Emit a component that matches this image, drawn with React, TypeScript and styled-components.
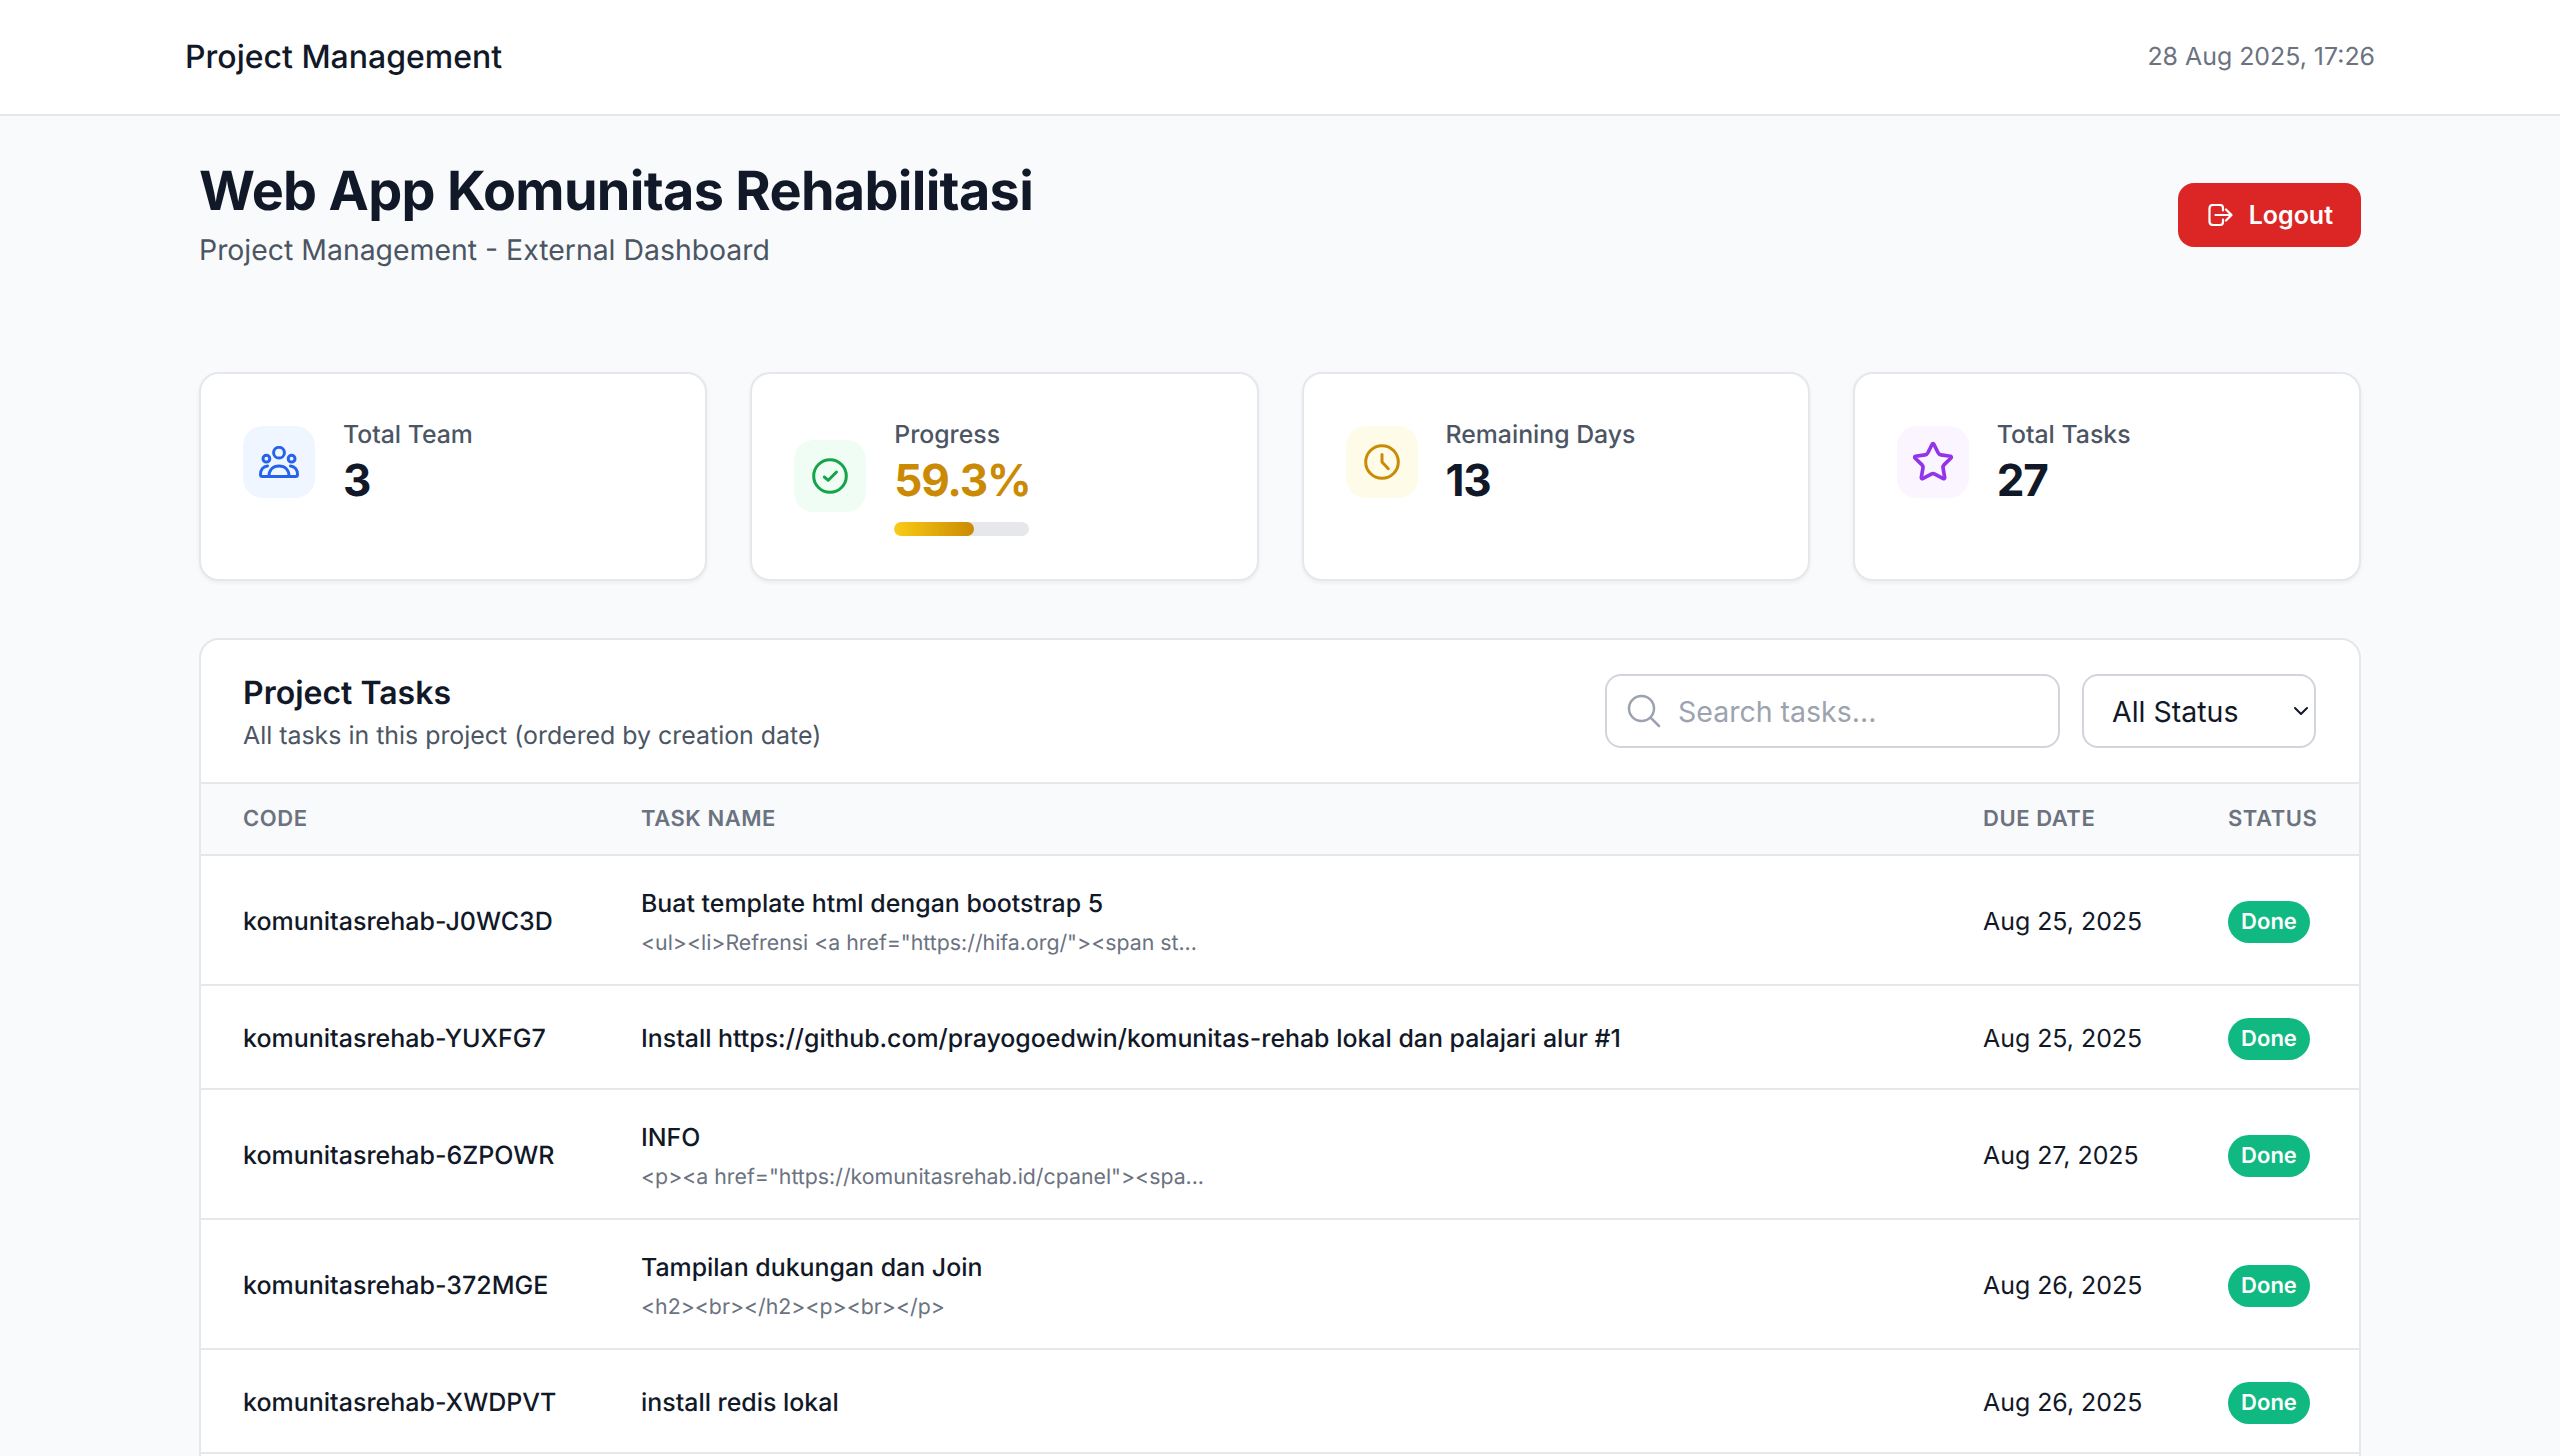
import styled, { createGlobalStyle } from 'styled-components';
import { Star, ChevronDown } from 'lucide-react';

const GlobalStyle = createGlobalStyle`
  html, body {
    margin: 0;
    height: 100%;
    overflow: hidden;
    background: #f9fafb;
    font-family: Inter, 'Noto Sans', sans-serif;
    color: #111827;
    text-rendering: geometricPrecision;
  }
  * { box-sizing: border-box; }
`;

const TONES = {
  blue: { bg: '#eff6ff', fg: '#2563eb' },
  green: { bg: '#f0fdf4', fg: '#16a34a' },
  yellow: { bg: '#fefce8', fg: '#ca8a04' },
  purple: { bg: '#faf5ff', fg: '#9333ea' },
};
type Tone = keyof typeof TONES;

const TopBar = styled.header`
  display: flex;
  align-items: center;
  justify-content: space-between;
  height: 116px;
  padding: 0 185px;
  background: #fff;
  border-bottom: 2px solid #e5e7eb;
`;

const Brand = styled.div`
  font-size: 32px;
  line-height: 40px;
  font-weight: 500;
  margin-bottom: 1px;
`;

const Clock = styled.div`
  font-size: 24.9px;
  color: #6b7280;
`;

const Main = styled.main`
  padding: 42px 199px 0;
`;

const PageHead = styled.div`
  display: flex;
  align-items: center;
  justify-content: space-between;
  margin-bottom: 101px;
`;

const PageTitle = styled.h1`
  margin: 2px 0 0;
  font-size: 54px;
  line-height: 64px;
  font-weight: 700;
  letter-spacing: -0.7px;
`;

const PageSub = styled.p`
  margin: 5px 0 0;
  font-size: 28.4px;
  line-height: 42px;
  color: #4b5563;
`;

const LogoutButton = styled.button`
  display: flex;
  align-items: center;
  gap: 16px;
  height: 64px;
  padding: 0 28px 0 30px;
  border: 0;
  border-radius: 16px;
  background: #dc2626;
  color: #fff;
  font: 600 25px Inter, sans-serif;
`;

const StatGrid = styled.section`
  display: grid;
  grid-template-columns: repeat(4, 1fr);
  gap: 43px;
  margin-bottom: 57px;
`;

const StatCard = styled.div`
  height: 209px;
  padding: 42px;
  background: #fff;
  border: 2px solid #e5e7eb;
  border-radius: 20px;
  box-shadow: 0 2px 4px rgba(0, 0, 0, 0.05);
`;

const StatRow = styled.div`
  display: flex;
  align-items: center;
  gap: 28px;
`;

const StatIcon = styled.div<{ $tone: Tone }>`
  display: flex;
  align-items: center;
  justify-content: center;
  flex: none;
  width: 72px;
  height: 72px;
  border-radius: 20px;
  background: ${(p) => TONES[p.$tone].bg};
  color: ${(p) => TONES[p.$tone].fg};
`;

const StatLabel = styled.div`
  font-size: 24.8px;
  line-height: 36px;
  font-weight: 500;
  color: #4b5563;
`;

const StatValue = styled.div<{ $accent?: boolean }>`
  font-size: 44px;
  line-height: 56px;
  font-weight: 700;
  letter-spacing: -1.2px;
  color: ${(p) => (p.$accent ? '#ca8a04' : '#111827')};
`;

const Track = styled.div`
  width: 135px;
  height: 14px;
  margin-top: 14px;
  border-radius: 7px;
  background: #e5e7eb;
  overflow: hidden;
`;

const Fill = styled.div`
  height: 100%;
  border-radius: 7px;
  background: linear-gradient(90deg, #facc15, #ca8a04);
`;

const Panel = styled.section`
  background: #fff;
  border: 2px solid #e5e7eb;
  border-radius: 20px;
  padding-bottom: 60px;
`;

const PanelHead = styled.div`
  display: flex;
  align-items: center;
  justify-content: space-between;
  height: 144px;
  padding: 0 43px 0 42px;
  border-bottom: 2px solid #e5e7eb;
`;

const TitleBlock = styled.div`
  padding-top: 2px;
`;

const PanelTitle = styled.h2`
  margin: 0;
  font-size: 32px;
  line-height: 44px;
  font-weight: 600;
`;

const PanelSub = styled.p`
  margin: 3px 0 0;
  font-size: 24.9px;
  line-height: 36px;
  color: #4b5563;
`;

const Controls = styled.div`
  display: flex;
  gap: 22px;
`;

const SearchField = styled.label`
  display: flex;
  align-items: center;
  gap: 14px;
  width: 455px;
  height: 74px;
  padding: 0 17px;
  border: 2px solid #d1d5db;
  border-radius: 16px;
  color: #9ca3af;
`;

const SearchInput = styled.input`
  flex: 1;
  min-width: 0;
  border: 0;
  outline: 0;
  padding: 0;
  font: 400 28.5px Inter, sans-serif;
  color: #111827;
  &::placeholder {
    color: #9ca3af;
    opacity: 1;
  }
`;

const SelectWrap = styled.div`
  position: relative;
  width: 234px;
  height: 74px;
  svg {
    position: absolute;
    right: 3px;
    top: 25px;
    pointer-events: none;
    color: #111827;
  }
`;

const StatusSelect = styled.select`
  width: 100%;
  height: 100%;
  padding: 0 0 0 28px;
  appearance: none;
  border: 2px solid #d1d5db;
  border-radius: 16px;
  background: #fff;
  font: 400 28.5px Inter, sans-serif;
  color: #111827;
`;

const Columns = styled.div`
  display: grid;
  grid-template-columns: 398px 1342px 245px 1fr;
  align-items: center;
  padding: 0 43px 0 42px;
`;

const TableHead = styled(Columns)`
  height: 72px;
  background: #f9fafb;
  border-bottom: 2px solid #e5e7eb;
  font-size: 22px;
  font-weight: 600;
  letter-spacing: 0.55px;
  text-transform: uppercase;
  color: #6b7280;
`;

const TaskRow = styled(Columns)<{ $tall: boolean }>`
  height: ${(p) => (p.$tall ? 130 : 104)}px;
  padding-top: 3px;
  border-bottom: 2px solid #e5e7eb;
  font-size: 24.9px;
`;

const TaskCode = styled.div`
  font-size: 25px;
  font-weight: 500;
`;

const TaskName = styled.div`
  font-weight: 500;
  line-height: 38px;
`;

const TaskNote = styled.div`
  margin-top: 4px;
  font-size: 21.3px;
  line-height: 32px;
  color: #6b7280;
`;

const DoneBadge = styled.span`
  display: inline-flex;
  align-items: center;
  justify-content: center;
  width: 82px;
  height: 42px;
  border-radius: 21px;
  background: #10b981;
  color: #fff;
  font-size: 22px;
  font-weight: 600;
`;

const TeamIcon = () => (
  <svg width="40" height="32" viewBox="0 0 40 32" fill="none" stroke="currentColor" strokeWidth="3" strokeLinecap="round" strokeLinejoin="round">
    <circle cx="20" cy="6.7" r="5.4" />
    <circle cx="7.4" cy="12.7" r="3.4" />
    <circle cx="32.6" cy="12.7" r="3.4" />
    <path d="M10 30.5C10 24 14 20 20 20s10 4 10 10.5" />
    <path d="M8.5 20C4 20.5 1.5 24 1.5 28.5q0 2 2 2h33q2 0 2-2c0-4.5-2.5-8-7-8.5" />
  </svg>
);

const CheckIcon = () => (
  <svg width="36" height="36" viewBox="0 0 36 36" fill="none" stroke="currentColor" strokeWidth="3" strokeLinecap="round" strokeLinejoin="round">
    <circle cx="18" cy="18" r="16.3" />
    <path d="M12.3 19l4 3.3L24.5 14" />
  </svg>
);

const ClockIcon = () => (
  <svg width="36" height="36" viewBox="0 0 36 36" fill="none" stroke="currentColor" strokeWidth="3" strokeLinecap="round" strokeLinejoin="round">
    <circle cx="18" cy="18" r="16.3" />
    <path d="M18 10.5V18l6.3 6.7" />
  </svg>
);

const LogoutIcon = () => (
  <svg width="25" height="22" viewBox="0 0 25 22" fill="none" stroke="currentColor" strokeWidth="2.2" strokeLinecap="round" strokeLinejoin="round">
    <path d="M15 6.5V4q0-3-3-3H5Q1.5 1 1.5 4.5v13Q1.5 21 5 21h7q3 0 3-3v-2.5" />
    <path d="M7.5 11H23.5M18 5.5l5.5 5.5-5.5 5.5" />
  </svg>
);

const SearchIcon = () => (
  <svg width="40" height="40" viewBox="0 0 24 24" fill="none" stroke="currentColor" strokeWidth="1.5" strokeLinecap="round" strokeLinejoin="round">
    <path d="m21 21-5.197-5.197m0 0A7.5 7.5 0 1 0 5.196 5.196a7.5 7.5 0 0 0 10.607 10.607Z" />
  </svg>
);

const TASKS = [
  { code: 'komunitasrehab-J0WC3D', name: 'Buat template html dengan bootstrap 5', note: '<ul><li>Refrensi <a href="https://hifa.org/"><span st...', due: 'Aug 25, 2025' },
  { code: 'komunitasrehab-YUXFG7', name: 'Install https://github.com/prayogoedwin/komunitas-rehab lokal dan palajari alur #1', due: 'Aug 25, 2025' },
  { code: 'komunitasrehab-6ZPOWR', name: 'INFO', note: '<p><a href="https://komunitasrehab.id/cpanel"><spa...', due: 'Aug 27, 2025' },
  { code: 'komunitasrehab-372MGE', name: 'Tampilan dukungan dan Join', note: '<h2><br></h2><p><br></p>', due: 'Aug 26, 2025' },
  { code: 'komunitasrehab-XWDPVT', name: 'install redis lokal', due: 'Aug 26, 2025' },
];

export default function App(): JSX.Element {
  return (
    <>
      <GlobalStyle />
      <TopBar>
        <Brand>Project Management</Brand>
        <Clock>28 Aug 2025, 17:26</Clock>
      </TopBar>
      <Main>
        <PageHead>
          <div>
            <PageTitle>Web App Komunitas Rehabilitasi</PageTitle>
            <PageSub>Project Management - External Dashboard</PageSub>
          </div>
          <LogoutButton>
            <LogoutIcon />
            Logout
          </LogoutButton>
        </PageHead>

        <StatGrid>
          <StatCard>
            <StatRow>
              <StatIcon $tone="blue"><TeamIcon /></StatIcon>
              <div>
                <StatLabel>Total Team</StatLabel>
                <StatValue>3</StatValue>
              </div>
            </StatRow>
          </StatCard>
          <StatCard>
            <StatRow>
              <StatIcon $tone="green"><CheckIcon /></StatIcon>
              <div>
                <StatLabel>Progress</StatLabel>
                <StatValue $accent>59.3%</StatValue>
                <Track><Fill style={{ width: '59.3%' }} /></Track>
              </div>
            </StatRow>
          </StatCard>
          <StatCard>
            <StatRow>
              <StatIcon $tone="yellow"><ClockIcon /></StatIcon>
              <div>
                <StatLabel>Remaining Days</StatLabel>
                <StatValue>13</StatValue>
              </div>
            </StatRow>
          </StatCard>
          <StatCard>
            <StatRow>
              <StatIcon $tone="purple"><Star size={44} strokeWidth={2} /></StatIcon>
              <div>
                <StatLabel>Total Tasks</StatLabel>
                <StatValue>27</StatValue>
              </div>
            </StatRow>
          </StatCard>
        </StatGrid>

        <Panel>
          <PanelHead>
            <TitleBlock>
              <PanelTitle>Project Tasks</PanelTitle>
              <PanelSub>All tasks in this project (ordered by creation date)</PanelSub>
            </TitleBlock>
            <Controls>
              <SearchField>
                <SearchIcon />
                <SearchInput placeholder="Search tasks..." />
              </SearchField>
              <SelectWrap>
                <StatusSelect defaultValue="all">
                  <option value="all">All Status</option>
                  <option value="done">Done</option>
                </StatusSelect>
                <ChevronDown size={24} strokeWidth={2} />
              </SelectWrap>
            </Controls>
          </PanelHead>
          <TableHead>
            <div>Code</div>
            <div>Task Name</div>
            <div>Due Date</div>
            <div>Status</div>
          </TableHead>
          {TASKS.map((task) => (
            <TaskRow key={task.code} $tall={Boolean(task.note)}>
              <TaskCode>{task.code}</TaskCode>
              <div>
                <TaskName>{task.name}</TaskName>
                {task.note && <TaskNote>{task.note}</TaskNote>}
              </div>
              <div>{task.due}</div>
              <div><DoneBadge>Done</DoneBadge></div>
            </TaskRow>
          ))}
        </Panel>
      </Main>
    </>
  );
}
